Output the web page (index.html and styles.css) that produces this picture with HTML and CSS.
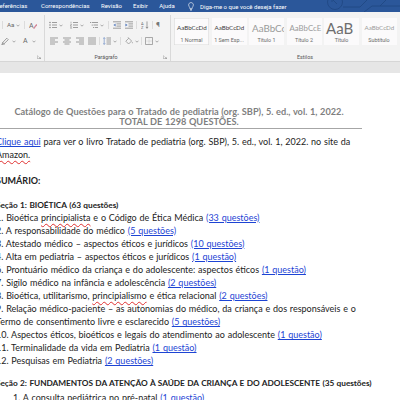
FILE: index.html
```html
<!DOCTYPE html>
<html lang="pt-BR">
<head>
<meta charset="utf-8">
<title>Catálogo de Questões</title>
<link rel="stylesheet" href="styles.css">
</head>
<body>
<div class="app">
  <header class="tabbar">
    <nav class="tabs">
      <span class="tab t-ref">Referências</span>
      <span class="tab t-corr">Correspondências</span>
      <span class="tab t-rev">Revisão</span>
      <span class="tab t-exi">Exibir</span>
      <span class="tab t-aju">Ajuda</span>
    </nav>
    <div class="tellme">
      <svg class="bulb" viewBox="0 0 6 9" width="6" height="9"><path d="M3 0.6C1.5 0.6 0.6 1.7 0.6 3C0.6 4.2 1.6 4.9 1.8 5.8V6.6H4.2V5.8C4.4 4.9 5.4 4.2 5.4 3C5.4 1.7 4.5 0.6 3 0.6Z M2 7.5H4 M2.3 8.4H3.7" fill="none" stroke="#fff" stroke-width="0.6"/></svg>
      <span class="tellme-text">Diga-me o que você deseja fazer</span>
    </div>
    <svg class="deco" viewBox="0 0 80 12" width="80" height="12"><g fill="none" stroke="#1f4681" stroke-width="0.8"><circle cx="15" cy="2" r="7.5"/><path d="M12 -1L17 4M12 -1H15M12 -1V2"/><path d="M23 7H40L47 0M44 12L52 6H80M60 6L66 0"/></g></svg>
  </header>

  <section class="ribbon">
    <div class="group g-font">
      <div class="row">
        <span class="vsep m2"></span>
        <span class="glyph aa m4">Aa</span>
        <svg class="cr m2" viewBox="0 0 4 3" width="4" height="3"><path d="M0.5 0.7L2 2.2L3.5 0.7" fill="none" stroke="#777" stroke-width="0.6"/></svg>
        <span class="vsep m4"></span>
        <svg class="ic m4" viewBox="0 0 8 8" width="8" height="8"><text x="0" y="6.6" font-size="7" font-family="Roboto" fill="#666">A</text><path d="M4.6 7.6L7.8 3.4" stroke="#d38a9a" stroke-width="1.4"/></svg>
      </div>
      <div class="row">
        <svg class="ic m1" viewBox="0 0 8 8" width="8" height="8"><path d="M1 7.5L1.8 5.4L5.8 1.2L7.3 2.7L3.1 6.7Z M1.8 5.4L3.1 6.7" fill="none" stroke="#666" stroke-width="0.6"/><path d="M0 7.8H4" stroke="#999" stroke-width="0.6"/></svg>
        <svg class="cr m3" viewBox="0 0 4 3" width="4" height="3"><path d="M0.5 0.7L2 2.2L3.5 0.7" fill="none" stroke="#777" stroke-width="0.6"/></svg>
        <span class="glyph fa m7">A</span>
        <svg class="cr m4" viewBox="0 0 4 3" width="4" height="3"><path d="M0.5 0.7L2 2.2L3.5 0.7" fill="none" stroke="#777" stroke-width="0.6"/></svg>
      </div>
      <div class="group-label">
        <span class="gl-text"></span>
        <svg class="launcher" viewBox="0 0 4 4" width="4" height="4"><path d="M0.3 0.3V3.7H3.7M1.5 1.5L3.6 3.6M3.6 2.2V3.6H2.2" fill="none" stroke="#888" stroke-width="0.5"/></svg>
      </div>
    </div>

    <div class="group g-para">
      <div class="row">
        <svg class="ic m4" viewBox="0 0 8 8" width="8" height="8"><g fill="#777"><circle cx="1" cy="1.5" r="0.7"/><circle cx="1" cy="4" r="0.7"/><circle cx="1" cy="6.5" r="0.7"/></g><path d="M3 1.5H8M3 4H8M3 6.5H8" stroke="#777" stroke-width="0.7"/></svg>
        <svg class="cr m2" viewBox="0 0 4 3" width="4" height="3"><path d="M0.5 0.7L2 2.2L3.5 0.7" fill="none" stroke="#777" stroke-width="0.6"/></svg>
        <svg class="ic m7" viewBox="0 0 8 8" width="8" height="8"><path d="M1 0.7V2.3M0.3 3.3H1.6L0.3 4.8H1.6M0.3 5.8H1.6L1 6.5L1.6 7.3H0.3" fill="none" stroke="#777" stroke-width="0.5"/><path d="M3 1.5H8M3 4H8M3 6.5H8" stroke="#777" stroke-width="0.7"/></svg>
        <svg class="cr m2" viewBox="0 0 4 3" width="4" height="3"><path d="M0.5 0.7L2 2.2L3.5 0.7" fill="none" stroke="#777" stroke-width="0.6"/></svg>
        <svg class="ic m6" viewBox="0 0 8 8" width="8" height="8"><g fill="#777"><circle cx="0.7" cy="1.5" r="0.6"/><circle cx="2.2" cy="4" r="0.6"/><circle cx="3.7" cy="6.5" r="0.6"/></g><path d="M2 1.5H8M3.5 4H8M5 6.5H8" stroke="#777" stroke-width="0.7"/></svg>
        <svg class="cr m2" viewBox="0 0 4 3" width="4" height="3"><path d="M0.5 0.7L2 2.2L3.5 0.7" fill="none" stroke="#777" stroke-width="0.6"/></svg>
        <span class="vsep m4"></span>
        <svg class="ic m4" viewBox="0 0 8 8" width="8" height="8"><path d="M0 0.8H8M3.5 2.9H8M3.5 5.1H8M0 7.2H8" stroke="#777" stroke-width="0.7"/><path d="M2.6 2.4L0.4 4L2.6 5.6Z" fill="#5a7fbf"/></svg>
        <svg class="ic m4" viewBox="0 0 8 8" width="8" height="8"><path d="M0 0.8H8M3.5 2.9H8M3.5 5.1H8M0 7.2H8" stroke="#777" stroke-width="0.7"/><path d="M0.4 2.4L2.6 4L0.4 5.6Z" fill="#5a7fbf"/></svg>
        <span class="vsep m3"></span>
        <svg class="ic m4" viewBox="0 0 8 8" width="8" height="8"><text x="0" y="3.6" font-size="4" font-family="Roboto" fill="#666">A</text><text x="0" y="8" font-size="4" font-family="Roboto" fill="#666">Z</text><path d="M6 0.4V7.2M4.9 5.9L6 7.3L7.1 5.9" fill="none" stroke="#666" stroke-width="0.6"/></svg>
        <span class="vsep m3"></span>
        <span class="glyph pil m3">¶</span>
      </div>
      <div class="row">
        <svg class="ic m5" viewBox="0 0 8 8" width="8" height="8"><path d="M0 1H8M0 3H5M0 5H8M0 7H5" stroke="#777" stroke-width="0.7"/></svg>
        <svg class="ic m5" viewBox="0 0 8 8" width="8" height="8"><path d="M0 1H8M1.5 3H6.5M0 5H8M1.5 7H6.5" stroke="#777" stroke-width="0.7"/></svg>
        <svg class="ic m5" viewBox="0 0 8 8" width="8" height="8"><path d="M0 1H8M3 3H8M0 5H8M3 7H8" stroke="#777" stroke-width="0.7"/></svg>
        <svg class="ic m4" viewBox="0 0 8 8" width="8" height="8"><path d="M0 1H8M0 3H8M0 5H8M0 7H8" stroke="#777" stroke-width="0.7"/></svg>
        <span class="vsep m3"></span>
        <svg class="ic m3" viewBox="0 0 8 8" width="8" height="8"><path d="M1.2 0.6V7.4M0.2 1.7L1.2 0.6L2.2 1.7M0.2 6.3L1.2 7.4L2.2 6.3" fill="none" stroke="#5a7fbf" stroke-width="0.6"/><path d="M3.5 1H8M3.5 3H8M3.5 5H8M3.5 7H8" stroke="#777" stroke-width="0.7"/></svg>
        <svg class="cr m2" viewBox="0 0 4 3" width="4" height="3"><path d="M0.5 0.7L2 2.2L3.5 0.7" fill="none" stroke="#777" stroke-width="0.6"/></svg>
        <span class="vsep m3"></span>
        <svg class="ic m4" viewBox="0 0 8 8" width="8" height="8"><path d="M0.8 4.2L3.8 1.2L6.6 4L3.6 7Z M3.8 1.2L3 0.3" fill="none" stroke="#777" stroke-width="0.6"/><path d="M7.2 4.8Q7.9 6 7.2 6.6Q6.5 6 7.2 4.8Z" fill="#777"/></svg>
        <svg class="cr m2" viewBox="0 0 4 3" width="4" height="3"><path d="M0.5 0.7L2 2.2L3.5 0.7" fill="none" stroke="#777" stroke-width="0.6"/></svg>
        <span class="vsep m2"></span>
        <svg class="ic m3" viewBox="0 0 8 8" width="8" height="8"><path d="M0.5 0.5H7.5V7.5H0.5Z" fill="none" stroke="#777" stroke-width="0.6"/><path d="M4 0.5V7.5M0.5 4H7.5" stroke="#aaa" stroke-width="0.5" stroke-dasharray="0.6 0.6"/></svg>
        <svg class="cr m2" viewBox="0 0 4 3" width="4" height="3"><path d="M0.5 0.7L2 2.2L3.5 0.7" fill="none" stroke="#777" stroke-width="0.6"/></svg>
      </div>
      <div class="group-label">
        <span class="gl-text">Parágrafo</span>
        <svg class="launcher" viewBox="0 0 4 4" width="4" height="4"><path d="M0.3 0.3V3.7H3.7M1.5 1.5L3.6 3.6M3.6 2.2V3.6H2.2" fill="none" stroke="#888" stroke-width="0.5"/></svg>
      </div>
    </div>

    <div class="group g-styles">
      <div class="gallery">
        <div class="sb sb-active"><span class="sb-sample s-normal">AaBbCcDd</span><span class="sb-name">1 Normal</span></div>
        <div class="sb"><span class="sb-sample s-normal">AaBbCcDd</span><span class="sb-name">1 Sem Esp...</span></div>
        <div class="sb"><span class="sb-sample s-h1">AaBbCc</span><span class="sb-name">Título 1</span></div>
        <div class="sb"><span class="sb-sample s-h2">AaBbCcE</span><span class="sb-name">Título 2</span></div>
        <div class="sb"><span class="sb-sample s-title">AaB</span><span class="sb-name">Título</span></div>
        <div class="sb"><span class="sb-sample s-sub">AaBbCcDd</span><span class="sb-name">Subtítulo</span></div>
      </div>
      <div class="group-label solo">
        <span class="gl-text">Estilos</span>
      </div>
    </div>
  </section>

  <div class="doc-gap"></div>

  <main class="page">
    <div class="doc-title">
      <p>Catálogo de Questões para o Tratado de pediatria (org. SBP), 5. ed., vol. 1, 2022.</p>
      <p>TOTAL DE 1298 QUESTÕES.</p>
    </div>
    <p class="intro"><a href="#">Clique aqui</a> para ver o livro Tratado de pediatria (org. SBP), 5. ed., vol. 1, 2022. no site da<br><span class="spell">Amazon.</span></p>
    <h2 class="summary">SUMÁRIO:</h2>
    <h3 class="section">Seção 1: BIOÉTICA (63 questões)</h3>
    <ul class="items">
      <li>1. Bioética <span class="spell">principialista</span> e o Código de Ética Médica <a href="#">(33 questões)</a></li>
      <li>2. A responsabilidade do médico <a href="#">(5 questões)</a></li>
      <li>3. Atestado médico – aspectos éticos e jurídicos <a href="#">(10 questões)</a></li>
      <li>4. Alta em pediatria – aspectos éticos e jurídicos <a href="#">(1 questão)</a></li>
      <li>6. Prontuário médico da criança e do adolescente: aspectos éticos <a href="#">(1 questão)</a></li>
      <li>7. Sigilo médico na infância e adolescência <a href="#">(2 questões)</a></li>
      <li>8. Bioética, utilitarismo, <span class="spell">principialismo</span> e ética relacional <a href="#">(2 questões)</a></li>
      <li>9. Relação médico-paciente – as autonomias do médico, da criança e dos responsáveis e o<br>Termo de consentimento livre e esclarecido <a href="#">(5 questões)</a></li>
      <li>10. Aspectos éticos, bioéticos e legais do atendimento ao adolescente <a href="#">(1 questão)</a></li>
      <li>11. Terminalidade da vida em Pediatria <a href="#">(1 questão)</a></li>
      <li>12. Pesquisas em Pediatria <a href="#">(2 questões)</a></li>
    </ul>
    <h3 class="section section-2">Seção 2: FUNDAMENTOS DA ATENÇÃO À SAÚDE DA CRIANÇA E DO ADOLESCENTE (35 questões)</h3>
    <ul class="items sub">
      <li>1. A consulta pediátrica no pré-natal <a href="#">(1 questão)</a></li>
    </ul>
  </main>
</div>
</body>
</html>
```

FILE: styles.css
```css
* { box-sizing: border-box; }
html, body { margin: 0; padding: 0; }
body { width: 400px; height: 400px; overflow: hidden; background: #fff; }

.app {
  width: 400px;
  height: 400px;
  overflow: hidden;
  display: flex;
  flex-direction: column;
}

/* ---------- tab bar ---------- */
.tabbar {
  position: relative;
  flex: none;
  height: 12px;
  background: #2b579a;
  color: #fff;
  display: flex;
  align-items: center;
  font-family: Roboto, "Open Sans", sans-serif;
  font-size: 6px;
  line-height: 1;
  white-space: nowrap;
  overflow: hidden;
}
.tabs { display: flex; gap: 12px; margin-left: -6px; }
.tab { display: block; text-align: center; }
.t-ref { width: 35px; }
.t-corr { width: 48px; }
.t-rev { width: 20px; }
.t-exi { width: 14px; }
.t-aju { width: 16px; }
.tellme { display: flex; align-items: center; gap: 6px; margin-left: 13px; padding-top: 1px; }
.bulb { display: block; }
.deco { position: absolute; right: 0; top: 0; }

/* ---------- ribbon ---------- */
.ribbon {
  flex: none;
  height: 50px;
  background: #f3f3f3;
  border-bottom: 1px solid #d6d6d6;
  padding-top: 3px;
  display: flex;
  font-family: Roboto, "Open Sans", sans-serif;
  color: #444;
}
.group {
  flex: none;
  height: 46px;
  display: flex;
  flex-direction: column;
  padding-top: 5px;
  border-right: 1px solid #d9d9d9;
}
.g-font { width: 45px; }
.g-para { width: 126px; }
.g-styles { width: 268px; border-right: none; padding-top: 0; }

.row { height: 10px; display: flex; align-items: center; }
.row + .row { margin-top: 6px; }

.ic, .cr { display: block; flex: none; }
.vsep { display: block; flex: none; width: 1px; height: 8px; background: #dcdcdc; }
.glyph { display: block; flex: none; color: #666; line-height: 1; }
.aa { font-size: 6.2px; }
.fa { font-size: 7px; }
.pil { font-size: 8px; color: #777; }

.m1 { margin-left: 1px; }
.m2 { margin-left: 2px; }
.m3 { margin-left: 3px; }
.m4 { margin-left: 4px; }
.m5 { margin-left: 5px; }
.m6 { margin-left: 6px; }
.m7 { margin-left: 7px; }

.group-label {
  margin-top: auto;
  height: 8px;
  display: grid;
  grid-template-columns: 1fr auto 1fr;
  align-items: center;
  padding-right: 3px;
  font-size: 5.3px;
  color: #555;
  white-space: nowrap;
}
.gl-text { grid-column: 2; }
.launcher { grid-column: 3; justify-self: end; display: block; }
.group-label.solo { padding-right: 0; }

/* style gallery */
.gallery { display: flex; gap: 2.5px; margin-left: 3px; margin-top: 3px; }
.sb {
  flex: none;
  width: 35px;
  height: 27px;
  background: #fbfafb;
  display: flex;
  flex-direction: column;
  overflow: hidden;
}
.sb-active { box-shadow: inset 0 0 0 0.6px #d9d9d9; }
.sb-sample {
  height: 19px;
  display: flex;
  align-items: center;
  padding-left: 3px;
  white-space: nowrap;
  overflow: hidden;
  font-family: Lato, "Liberation Sans", sans-serif;
}
.sb-name {
  height: 8px;
  line-height: 7px;
  font-size: 5.4px;
  text-align: center;
  color: #6a6a6a;
  white-space: nowrap;
  overflow: hidden;
}
.s-normal { font-size: 6.2px; color: #3c3c3c; }
.s-h1 { font-size: 9.8px; color: #9a9a9a; }
.s-h2 { font-size: 7.8px; color: #9a9a9a; }
.s-title { font-size: 15px; color: #6e6e6e; padding-left: 2px; }
.s-sub { font-size: 6.2px; color: #9a9a9a; }

/* ---------- document ---------- */
.doc-gap { flex: none; height: 11px; background: #e6e6e6; }

.page {
  flex: none;
  width: 366px;
  margin-left: -4px;
  padding-top: 33.7px;
  font-family: Lato, "Liberation Sans", sans-serif;
  font-size: 9px;
  word-spacing: 0.5px;
  color: #232323;
}
.page p, .page h2, .page h3, .page ul { margin: 0; padding: 0; }

.doc-title {
  text-align: center;
  color: #7f7f7f;
  font-weight: 700;
  font-size: 9.2px;
  word-spacing: 0.4px;
  line-height: 10px;
  padding-bottom: 1.3px;
  border-bottom: 1px solid #a6a6a6;
  white-space: nowrap;
}

.page a {
  color: #1d44d4;
  text-decoration: underline;
  text-decoration-thickness: 0.8px;
  text-underline-offset: 1.2px;
}
.spell {
  text-decoration: underline wavy #e03030;
  text-decoration-thickness: 0.6px;
  text-underline-offset: 1.5px;
}

.page .intro { margin-top: 7.4px; line-height: 12.2px; white-space: nowrap; }
.page .summary { margin-top: 13.3px; font-size: 9px; font-weight: 700; line-height: 13px; }
.page .section { margin-top: 12.5px; font-size: 8.3px; letter-spacing: -0.06px; font-weight: 700; line-height: 11px; white-space: nowrap; }
.page .section-2 { margin-top: 10.4px; }

.items { list-style: none; line-height: 13.06px; white-space: nowrap; }
.items.sub { margin-top: 2px; }
.items.sub li { padding-left: 17px; }
```
